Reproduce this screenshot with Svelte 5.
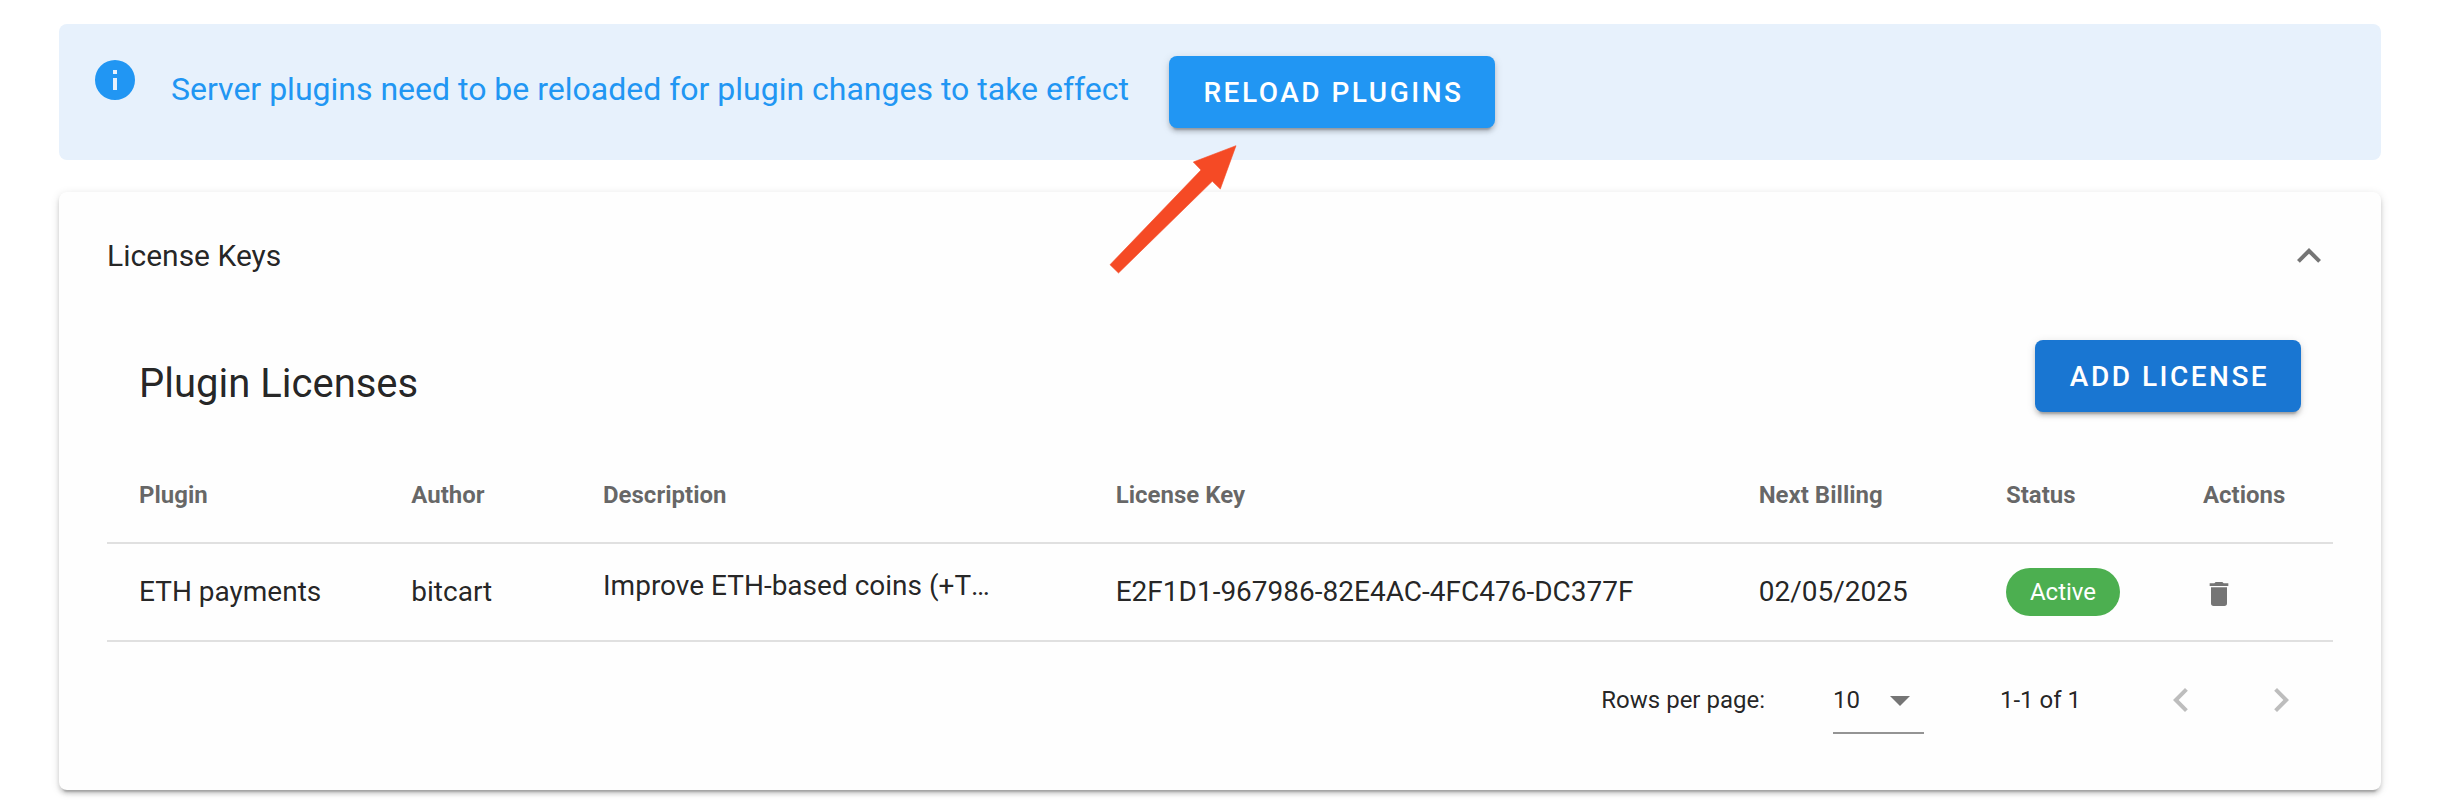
<script>
  const icons = {
    info: 'M13,9H11V7H13M13,17H11V11H13M12,2A10,10 0 0,0 2,12A10,10 0 0,0 12,22A10,10 0 0,0 22,12A10,10 0 0,0 12,2Z',
    up: 'M7.41,15.41L12,10.83L16.59,15.41L18,14L12,8L6,14L7.41,15.41Z',
    trash: 'M19,4H15.5L14.5,3H9.5L8.5,4H5V6H19M6,19A2,2 0 0,0 8,21H16A2,2 0 0,0 18,19V7H6V19Z',
    menu: 'M7,10L12,15L17,10H7Z',
    left: 'M15.41,16.58L10.83,12L15.41,7.41L14,6L8,12L14,18L15.41,16.58Z',
    right: 'M8.59,16.58L13.17,12L8.59,7.41L10,6L16,12L10,18L8.59,16.58Z'
  };
  const headers = ['Plugin', 'Author', 'Description', 'License Key', 'Next Billing', 'Status', 'Actions'];
  const licenses = [
    {
      plugin: 'ETH payments',
      author: 'bitcart',
      description: 'Improve ETH-based coins (+T',
      key: 'E2F1D1-967986-82E4AC-4FC476-DC377F',
      billing: '02/05/2025',
      status: 'Active'
    }
  ];
</script>

{#snippet icon(name)}
  <svg class="icon {name}" viewBox="0 0 24 24" aria-hidden="true"><path d={icons[name]} /></svg>
{/snippet}

<main>
  <section class="alert">
    {@render icon('info')}
    <span class="message">Server plugins need to be reloaded for plugin changes to take effect</span>
    <button class="btn reload">Reload plugins</button>
  </section>

  <section class="panel">
    <header class="panel-header">
      <span>License Keys</span>
      {@render icon('up')}
    </header>
    <div class="content">
      <div class="title-row">
        <h2>Plugin Licenses</h2>
        <button class="btn add">Add license</button>
      </div>
      <div class="row head">
        {#each headers as header}
          <span>{header}</span>
        {/each}
      </div>
      {#each licenses as item}
        <div class="row">
          <span class="cell">{item.plugin}</span>
          <span class="cell">{item.author}</span>
          <span class="cell description">{item.description}<span class="more">…</span></span>
          <span class="cell">{item.key}</span>
          <span class="cell">{item.billing}</span>
          <span class="chip">{item.status}</span>
          {@render icon('trash')}
        </div>
      {/each}
      <footer>
        <span class="label">Rows per page:</span>
        <div class="select"><span>10</span>{@render icon('menu')}</div>
        <span class="range">1-1 of 1</span>
        {@render icon('left')}
        {@render icon('right')}
      </footer>
    </div>
  </section>

  <svg class="arrow" viewBox="1108 144 130 131" aria-hidden="true">
    <path d="M1236 145.7L1193.3 162L1201 170L1110 264.7L1118.5 273L1212.3 181.3L1220.3 189Z" />
  </svg>
</main>

<style>
  :global(body) {
    margin: 0;
    background: #fff;
  }
  main {
    position: relative;
    box-sizing: border-box;
    height: 800px;
    overflow: hidden;
    padding: 24px 65px 10px 59px;
    display: flex;
    flex-direction: column;
    gap: 32px;
    font-family: Roboto, sans-serif;
    color: rgba(0, 0, 0, 0.87);
  }
  .icon {
    width: 48px;
    height: 48px;
    flex: none;
    display: block;
    fill: #757575;
  }
  .alert {
    box-sizing: border-box;
    height: 136px;
    padding: 32px;
    display: flex;
    align-items: flex-start;
    border-radius: 8px;
    background: #e7f1fc;
    color: #2196f3;
  }
  .icon.info {
    fill: #2196f3;
    margin-right: 32px;
  }
  .message {
    font-size: 32px;
    line-height: 48px;
    padding-top: 9px;
    white-space: nowrap;
    width: 966px;
  }
  .btn {
    box-sizing: border-box;
    height: 72px;
    padding: 1px 0 0 3px;
    border: 0;
    border-radius: 8px;
    color: #fff;
    font: 500 28px/71px Roboto, sans-serif;
    letter-spacing: 0.0892857em;
    text-transform: uppercase;
    white-space: nowrap;
    box-shadow: 0 6px 2px -4px rgba(0, 0, 0, 0.2), 0 4px 4px rgba(0, 0, 0, 0.14), 0 2px 10px rgba(0, 0, 0, 0.12);
  }
  .reload {
    width: 326px;
    margin-left: 32px;
    background: #2196f3;
  }
  .add {
    width: 266px;
    background: #1976d2;
  }
  .panel {
    height: 598px;
    border-radius: 8px;
    background: #fefefe;
    box-shadow: 0 6px 2px -4px rgba(0, 0, 0, 0.2), 0 4px 4px rgba(0, 0, 0, 0.14), 0 2px 10px rgba(0, 0, 0, 0.12);
  }
  .panel-header {
    height: 128px;
    padding: 0 48px;
    display: flex;
    align-items: center;
    justify-content: space-between;
    font-size: 30px;
  }
  .panel-header span {
    padding-bottom: 2px;
  }
  .content {
    margin: 0 48px;
  }
  .title-row {
    box-sizing: border-box;
    height: 128px;
    padding: 20px 32px 0;
    display: flex;
    justify-content: space-between;
    align-items: flex-start;
  }
  h2 {
    margin: 0;
    padding-top: 12px;
    font-size: 40px;
    font-weight: 400;
    line-height: 64px;
  }
  .row {
    box-sizing: border-box;
    height: 98px;
    padding-left: 32px;
    display: grid;
    grid-template-columns: 272.3px 191.7px 512.7px 643px 247.3px 197px 1fr;
    align-items: center;
    border-bottom: 2px solid #e0e0e0;
    font-size: 28px;
    white-space: nowrap;
  }
  .row.head {
    height: 96px;
    font-size: 24px;
    font-weight: 700;
    color: rgba(0, 0, 0, 0.6);
  }
  .cell {
    padding-bottom: 2px;
  }
  .cell.description {
    padding-bottom: 13px;
  }
  .more {
    display: inline-block;
  }
  .chip {
    box-sizing: border-box;
    width: 114px;
    height: 48px;
    border-radius: 24px;
    background: #4caf50;
    color: #fff;
    font-size: 24px;
    line-height: 48px;
    text-align: center;
  }
  .icon.trash {
    width: 32px;
    height: 32px;
    margin-top: 4px;
  }
  footer {
    height: 116px;
    display: flex;
    align-items: center;
    justify-content: flex-end;
    padding-right: 28px;
    font-size: 24px;
  }
  .label {
    margin-right: 68px;
  }
  .select {
    box-sizing: border-box;
    width: 91px;
    height: 68px;
    padding-top: 2px;
    display: flex;
    align-items: center;
    justify-content: space-between;
    border-bottom: 2px solid #949494;
  }
  .range {
    width: 157px;
    margin-left: 76px;
  }
  .icon.left,
  .icon.right {
    fill: #bdbdbd;
  }
  .icon.right {
    margin-left: 52px;
  }
  .arrow {
    position: absolute;
    left: 1108px;
    top: 144px;
    width: 130px;
    height: 131px;
    fill: #f54a25;
    stroke: #f54a25;
    stroke-width: 0.6;
    stroke-linejoin: round;
  }
</style>
